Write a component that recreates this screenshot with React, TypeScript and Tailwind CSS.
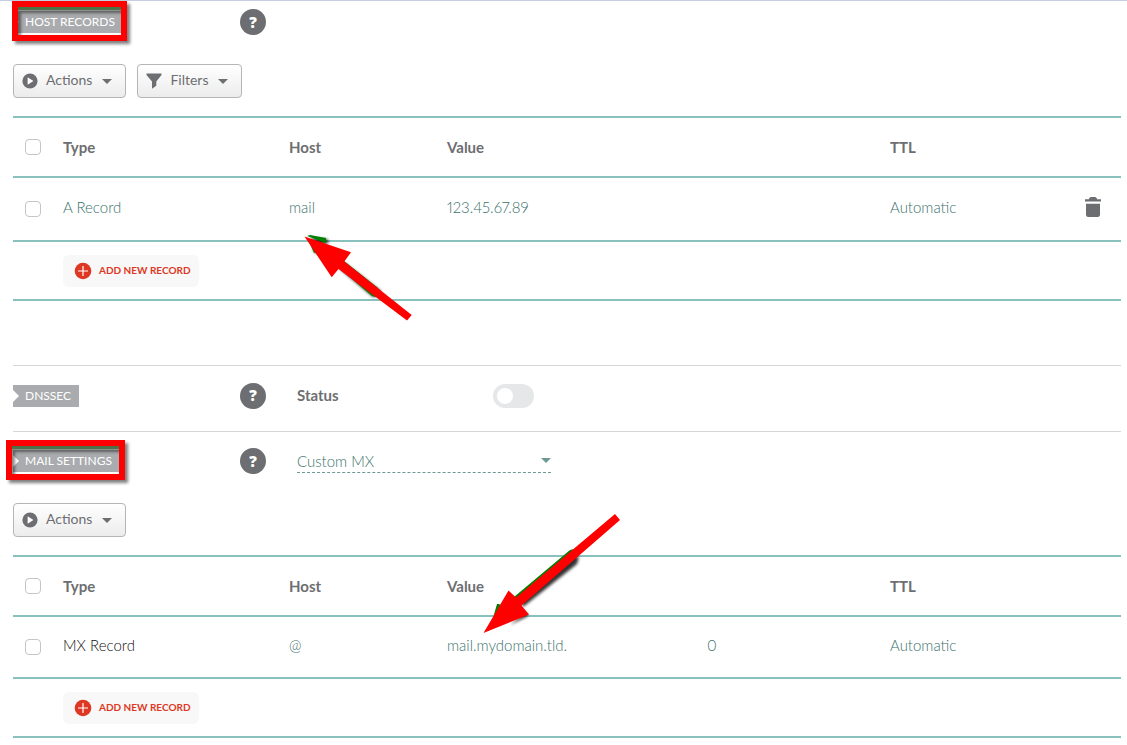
import { ReactNode } from 'react'

interface DnsRecord {
  id: string
  type: string
  host: string
  value: string
  priority?: string
  ttl: string
  locked?: boolean
}

const hostRecords: DnsRecord[] = [
  { id: 'a-1', type: 'A Record', host: 'mail', value: '123.45.67.89', ttl: 'Automatic' },
]

const mailRecords: DnsRecord[] = [
  {
    id: 'mx-1',
    type: 'MX Record',
    host: '@',
    value: 'mail.mydomain.tld.',
    priority: '0',
    ttl: 'Automatic',
    locked: true,
  },
]

function Caret({ className = '' }: { className?: string }) {
  return (
    <svg viewBox="0 0 10 5" className={`h-[5px] w-[10px] fill-current ${className}`} aria-hidden="true">
      <path d="M0 0h10L5 5z" />
    </svg>
  )
}

function PlayIcon() {
  return (
    <svg viewBox="0 0 16 16" className="h-4 w-4" aria-hidden="true">
      <circle cx="8" cy="8" r="7.6" fill="#6d6e71" />
      <path d="M5.6 4.3v7.4L11.4 8z" fill="#fff" />
    </svg>
  )
}

function FunnelIcon() {
  return (
    <svg viewBox="0 0 16 16" className="h-4 w-4" aria-hidden="true">
      <path d="M.5.5h15v1.500L10.300 8.600v4.200L6 15.800V8.600L.5 2z" fill="#6d6e71" />
    </svg>
  )
}

function TrashIcon() {
  return (
    <svg viewBox="0 0 16 20" className="h-5 w-4" aria-hidden="true">
      <path
        d="M4 2.2C4 1 5 0 6 0h4c1 0 2 1 2 2.2h4V4.6H0V2.2zM1 6.8h14v11c0 1.2-.9 2.2-2 2.2H3c-1.100 0-2-1-2-2.200z"
        fill="#6d6e71"
      />
    </svg>
  )
}

function MenuButton({ icon, children }: { icon: ReactNode; children: ReactNode }) {
  return (
    <button className="flex h-[34px] items-center rounded border border-[#b5b5b7] bg-linear-to-b from-white to-[#ececec] px-2 text-sm text-[#6d6e71]">
      {icon}
      <span className="mr-[10px] ml-2 pb-0.5">{children}</span>
      <Caret className="mr-[5px]" />
    </button>
  )
}

function HelpButton() {
  return (
    <button
      aria-label="Help"
      className="flex h-[26px] w-[26px] shrink-0 items-center justify-center rounded-full bg-[#6d6e71] font-['Open_Sans',sans-serif] text-[15px] font-extrabold text-white"
    >
      ?
    </button>
  )
}

function SectionLabel({ children, marker }: { children: ReactNode; marker?: ReactNode }) {
  return (
    <div className="flex w-[227px] shrink-0">
      <h2 className="relative flex h-[22px] items-center bg-[#a9abae] pr-2 pl-3 text-xs text-white">
        <svg viewBox="0 0 6 12" className="absolute top-[5px] left-0 h-3 w-[6px]" aria-hidden="true">
          <path d="M0 0l6 6-6 6z" fill="#fff" />
        </svg>
        {children}
        {marker}
      </h2>
    </div>
  )
}

function Highlight({ className }: { className: string }) {
  return (
    <span
      className={`pointer-events-none absolute border-6 border-[#fe0000] shadow-[3px_3px_3px_rgba(0,0,0,0.5)] ${className}`}
    >
      <span className="block h-full border-t-3 border-[#4d7247] shadow-[inset_3px_3px_3px_rgba(0,0,0,0.45)]" />
    </span>
  )
}

function Checkbox({ label }: { label: string }) {
  return (
    <input
      type="checkbox"
      aria-label={label}
      className="ml-3 block h-4 w-4 appearance-none rounded border border-[#c5c5c7] bg-white checked:bg-[#6d9994]"
    />
  )
}

function RecordTable({ records, label }: { records: DnsRecord[]; label: string }) {
  const cell = 'border-t-2 border-[#88c1be] p-0 text-left'
  const dataCell = `${cell} pb-1 proportional-nums`

  return (
    <table
      aria-label={label}
      className="w-full table-fixed border-separate border-spacing-0 border-b-2 border-[#88c1be] text-[15px]"
    >
      <colgroup>
        <col className="w-[50px]" />
        <col className="w-[226px]" />
        <col className="w-[158px]" />
        <col />
        <col className="w-[183px]" />
        <col className="w-[195px]" />
        <col className="w-9" />
      </colgroup>
      <thead>
        <tr className="h-[60px] text-[#6d6e71]">
          <th className={cell}>
            <Checkbox label="Select all records" />
          </th>
          <th className={cell}>Type</th>
          <th className={cell}>Host</th>
          <th className={cell}>Value</th>
          <th className={cell} aria-label="Priority" />
          <th className={cell}>TTL</th>
          <th className={cell} aria-label="Remove" />
        </tr>
      </thead>
      <tbody>
        {records.map((record) => (
          <tr
            key={record.id}
            className={record.locked ? 'h-[62px] font-light text-[#3c726b]' : 'h-16 font-light text-[#3c726b]'}
          >
            <td className={cell}>
              <Checkbox label={`Select ${record.type}`} />
            </td>
            <td className={record.locked ? `${dataCell} text-[#111113]` : dataCell}>{record.type}</td>
            <td className={dataCell}>{record.host}</td>
            <td className={dataCell}>{record.value}</td>
            <td className={dataCell}>{record.priority}</td>
            <td className={dataCell}>{record.ttl}</td>
            <td className={dataCell}>
              {!record.locked && (
                <button aria-label="Remove record" className="block">
                  <TrashIcon />
                </button>
              )}
            </td>
          </tr>
        ))}
        <tr className="h-[59px]">
          <td className={cell} />
          <td className={cell} colSpan={6}>
            <button className="flex h-8 items-center gap-[7px] rounded-md bg-[#f8f8f8] pr-2 pl-[11px] text-[10px] font-bold text-[#de3723]">
              <svg viewBox="0 0 18 18" className="h-[18px] w-[18px]" aria-hidden="true">
                <circle cx="9" cy="9" r="8.300" fill="#de3723" />
                <path d="M9 4v10M4 9h10" stroke="#fff" strokeWidth="1.200" />
              </svg>
              ADD NEW RECORD
            </button>
          </td>
        </tr>
      </tbody>
    </table>
  )
}

function Arrows() {
  return (
    <svg
      width="640"
      height="660"
      viewBox="0 1 640 660"
      className="pointer-events-none absolute top-0 left-0"
      aria-hidden="true"
    >
      <defs>
        <filter id="soft" x="-20%" y="-20%" width="140%" height="140%">
          <feGaussianBlur stdDeviation="1.500" />
        </filter>
      </defs>
      <g filter="url(#soft)" fill="#000" opacity="0.8">
        <path d="M310 238l17 1 2 4-12 2zM312 248l4 6 3-2zM340 269l33 28 6-1 2-5-36-28z" />
        <path d="M523 607l54-43 2-7-6-2-52 46zM510 625l18-9-2-4z" />
      </g>
      <g fill="#008000">
        <path d="M307 236l3-1 16 3v5zM310 244l4 9 3-1zM340 269l32 27 4 1 3-5-1-4-34-27z" />
        <path d="M514 597l56-47 4-1 4 4-60 50zM493 618l4-14h2l3 2z" />
      </g>
      <path d="M304.500 236.500L351 252.300 344.300 261.500 411.700 315 407 320.500 338.500 269 331.700 277.300z" fill="#fe0000" />
      <path d="M483.500 633L508.500 590.500 516 597.500 615 514 620 520 521.500 605.500 529 614.500z" fill="#fe0000" />
    </svg>
  )
}

export default function App() {
  return (
    <main className="relative border-t border-[#c5cde0] bg-white pr-[6px] pb-[7px] pl-[13px] font-[Lato,sans-serif] text-[15px] text-[#6d6e71]">
      <section>
        <div className="flex h-[42px] items-center">
          <SectionLabel marker={<Highlight className="-top-[10px] -left-px h-10 w-[115px]" />}>
            HOST RECORDS
          </SectionLabel>
          <HelpButton />
        </div>
        <div className="mt-[21px] mb-[18px] flex gap-[11px]">
          <MenuButton icon={<PlayIcon />}>Actions</MenuButton>
          <MenuButton icon={<FunnelIcon />}>Filters</MenuButton>
        </div>
        <RecordTable records={hostRecords} label="Host records" />
      </section>

      <section className="mt-16 flex h-[66px] items-center border-t border-[#d6d6d8] pb-[6px]">
        <SectionLabel>DNSSEC</SectionLabel>
        <HelpButton />
        <label htmlFor="dnssec" className="ml-[31px] w-[196px] font-bold">
          Status
        </label>
        <input
          id="dnssec"
          type="checkbox"
          role="switch"
          className="h-6 w-[41px] appearance-none rounded-full bg-[#e6e7e8] p-1 before:block before:h-4 before:w-4 before:rounded-full before:bg-white checked:bg-[#6d9994] checked:before:ml-auto"
        />
      </section>

      <section className="border-t border-[#d6d6d8]">
        <div className="flex h-[58px] items-center">
          <SectionLabel marker={<Highlight className="-top-[10px] -left-[7px] h-10 w-[119px]" />}>
            MAIL SETTINGS
          </SectionLabel>
          <HelpButton />
          <div className="relative ml-[31px] flex w-[254px] items-center border-b border-dashed border-[#6d9994] text-[#3c726b]">
            <select aria-label="Mail service" className="h-[22px] w-full appearance-none bg-transparent font-light">
              <option>Custom MX</option>
            </select>
            <Caret className="pointer-events-none absolute right-0 text-[#6d9994]" />
          </div>
        </div>
        <div className="mt-[13px] mb-[18px] flex">
          <MenuButton icon={<PlayIcon />}>Actions</MenuButton>
        </div>
        <RecordTable records={mailRecords} label="Mail records" />
      </section>

      <Arrows />
    </main>
  )
}
